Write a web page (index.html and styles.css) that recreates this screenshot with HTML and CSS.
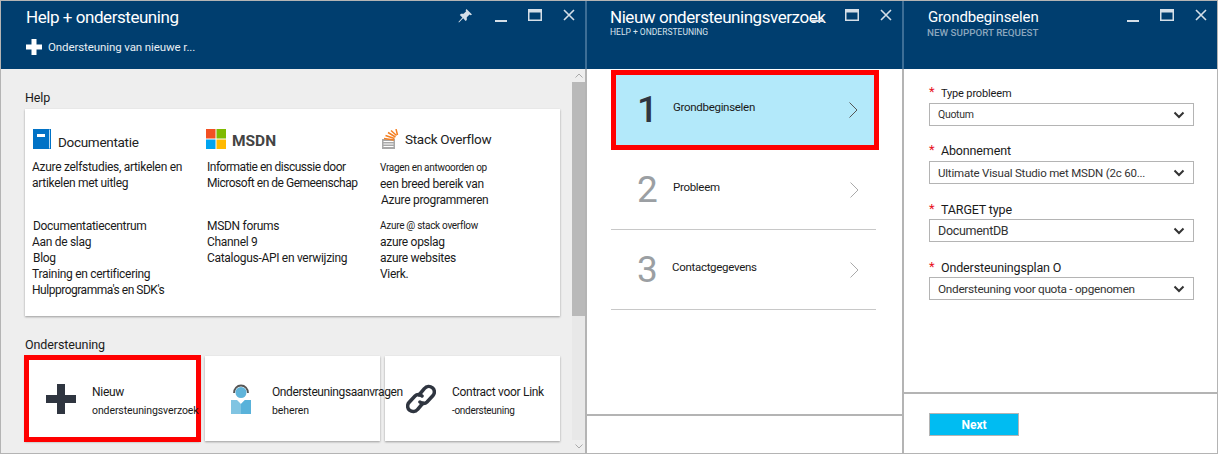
FILE: index.html
```html
<!DOCTYPE html>
<html>
    <head>
        <title>Help + ondersteuning</title>
        <meta charset=utf8>
        <link rel="stylesheet" href="styles.css">
    </head>
    <body>
        <svg class="defs" width="0" height="0">
            <symbol id="i-pin" viewBox="0 0 14 14"><path d="M8.500 0 14 5.500 12.600 6.200 11.600 5.600 8.800 8.200 8.800 11 7.600 12 5.200 9.200 1 13.400 0.400 13 4.400 8.400 1.800 6 3 4.800 5.600 4.800 8.200 2.200 7.600 1.200Z" fill="#d5dfe8"/></symbol>
            <symbol id="i-min" viewBox="0 0 12 12"><rect x="0" y="10" width="12" height="2" fill="#d5dfe8"/></symbol>
            <symbol id="i-max" viewBox="0 0 14 12"><path d="M0 0H14V12H0ZM1.500 3.500V10.500H12.500V3.500Z" fill="#d5dfe8" fill-rule="evenodd"/></symbol>
            <symbol id="i-close" viewBox="0 0 12 12"><path d="M1 1 11 11M11 1 1 11" stroke="#d5dfe8" stroke-width="1.600" fill="none"/></symbol>
            <symbol id="i-caret" viewBox="0 0 12 8"><path d="M1.500 1.500 6 6 10.500 1.500" stroke="#333" stroke-width="2" fill="none"/></symbol>
        </svg>

        <div class="portal">
            <!-- first blade -->
            <section class="blade blade-help">
                <header class="head head-tall">
                    <div class="head-top">
                        <h1 class="title">Help + ondersteuning</h1>
                        <div class="controls">
                            <svg class="ctl ctl-pin"><use href="#i-pin"/></svg>
                            <svg class="ctl ctl-min"><use href="#i-min"/></svg>
                            <svg class="ctl ctl-max"><use href="#i-max"/></svg>
                            <svg class="ctl ctl-close"><use href="#i-close"/></svg>
                        </div>
                    </div>
                    <div class="command">
                        <svg class="command-plus" viewBox="0 0 16 16"><path d="M5.500 0h5v5.500H16v5h-5.500V16h-5v-5.500H0v-5h5.500Z" fill="#fff"/></svg>
                        <span>Ondersteuning van nieuwe r...</span>
                    </div>
                </header>
                <div class="help-body">
                    <div class="help-main">
                        <h3 class="section-label">Help</h3>
                        <div class="card">
                            <div class="col col-docs">
                                <div class="col-head">
                                    <svg class="logo-book" viewBox="0 0 18 20">
                                        <path d="M0 0H18V20H0Z" fill="#0072c6"/>
                                        <path d="M16.500 0.500V19.500" stroke="#bcdcf2" stroke-width="1"/>
                                        <rect x="4" y="5" width="8" height="3" fill="#fff"/>
                                    </svg>
                                    <span class="col-title col-title-docs">Documentatie</span>
                                </div>
                                <p class="desc">Azure zelfstudies, artikelen en<br>artikelen met uitleg</p>
                                <ul class="links">
                                    <li class="nudge">Documentatiecentrum</li>
                                    <li>Aan de slag</li>
                                    <li class="nudge">Blog</li>
                                    <li>Training en certificering</li>
                                    <li class="tight">Hulpprogramma's en SDK's</li>
                                </ul>
                            </div>
                            <div class="col col-msdn">
                                <div class="col-head">
                                    <svg class="logo-ms" viewBox="0 0 20 20">
                                        <rect width="9.500" height="9.500" fill="#f25022"/>
                                        <rect x="10.500" width="9.500" height="9.500" fill="#7fba00"/>
                                        <rect y="10.500" width="9.500" height="9.500" fill="#00a4ef"/>
                                        <rect x="10.500" y="10.500" width="9.500" height="9.500" fill="#ffb900"/>
                                    </svg>
                                    <span class="msdn">MSDN</span>
                                </div>
                                <p class="desc tight">Informatie en discussie door<br>Microsoft en de Gemeenschap</p>
                                <ul class="links">
                                    <li>MSDN forums</li>
                                    <li>Channel 9</li>
                                    <li>Catalogus-API en verwijzing</li>
                                </ul>
                            </div>
                            <div class="col col-so">
                                <div class="col-head">
                                    <svg class="logo-so" viewBox="0 0 18 20">
                                        <path d="M1 10H14V20H1Z" fill="#a8a8a8"/>
                                        <path d="M2.500 12.500H12.500M2.500 15H12.500M2.500 17.500H12.500" stroke="#fff" stroke-width="1"/>
                                        <path d="M3 9.500 13 11M4.500 6.500 13.500 9.500M7 3.500 14.500 8M10 1.500 15.500 6.500M15 0 16.500 6" stroke="#f48024" stroke-width="1.500" fill="none"/>
                                    </svg>
                                    <span class="col-title">Stack Overflow</span>
                                </div>
                                <p class="desc"><span class="tiny">Vragen en antwoorden op</span><br>een breed bereik van<br><span class="nudge-inline">Azure programmeren</span></p>
                                <ul class="links">
                                    <li class="tiny">Azure @ stack overflow</li>
                                    <li>azure opslag</li>
                                    <li>azure websites</li>
                                    <li>Vierk.</li>
                                </ul>
                            </div>
                        </div>
                        <h3 class="section-label">Ondersteuning</h3>
                        <div class="tiles">
                            <div class="tile tile-marked">
                                <svg class="tile-icon" viewBox="0 0 30 30"><path d="M11 0H19V11H30V19H19V30H11V19H0V11H11Z" fill="#2f3540"/></svg>
                                <div class="tile-text">
                                    <div>Nieuw</div>
                                    <div class="tile-sub">ondersteuningsverzoek</div>
                                </div>
                            </div>
                            <div class="tile">
                                <svg class="tile-icon tile-icon-person" viewBox="0 0 20 30">
                                    <path d="M3 9A7 7.500 0 1 1 17 9" stroke="#555" stroke-width="1.800" fill="none"/>
                                    <circle cx="10" cy="8.500" r="5.500" fill="#5fb4da"/>
                                    <path d="M0 16H6L10 20 14 16H20V30H0Z" fill="#80c4e2"/>
                                    <path d="M10 20 14 16H20V30H10Z" fill="#59b2da"/>
                                </svg>
                                <div class="tile-text">
                                    <div class="tile-main-tight">Ondersteuningsaanvragen</div>
                                    <div class="tile-sub">beheren</div>
                                </div>
                            </div>
                            <div class="tile">
                                <svg class="tile-icon" viewBox="0 0 30 30">
                                    <g fill="none" stroke="#2f3540" stroke-width="3.500" stroke-linecap="round">
                                        <path d="M13 11 18.500 4.500C20.500 2 24 1.800 26.500 3.800 29 6 28.800 9.500 27 11.500L21 18C19 20 16 19.800 14 18"/>
                                        <path d="M17 19 11.500 25.500C9.500 28 6 28.200 3.500 26.200 1 24 1.200 20.500 3 18.500L9 12C11 10 14 10.200 16 12"/>
                                    </g>
                                </svg>
                                <div class="tile-text">
                                    <div>Contract voor Link</div>
                                    <div class="tile-sub tile-sub-small">-ondersteuning</div>
                                </div>
                            </div>
                        </div>
                    </div>
                    <div class="scrollbar">
                        <div class="scroll-btn">
                            <svg viewBox="0 0 8 5" class="scroll-arrow"><path d="M0.500 4.500 4 1 7.500 4.500" stroke="#aaa" fill="none"/></svg>
                        </div>
                        <div class="scroll-thumb"></div>
                        <div class="scroll-rest"></div>
                        <div class="scroll-btn">
                            <svg viewBox="0 0 8 5" class="scroll-arrow"><path d="M0.500 0.500 4 4 7.500 0.500" stroke="#aaa" fill="none"/></svg>
                        </div>
                    </div>
                </div>
            </section>

            <!-- second blade -->
            <section class="blade blade-steps">
                <header class="head head-tall">
                    <div class="head-top">
                        <div class="title-wrap">
                            <h1 class="title">Nieuw ondersteuningsverzoek</h1>
                            <div class="subtitle subtitle-light">HELP + ONDERSTEUNING</div>
                        </div>
                        <div class="controls">
                            <svg class="ctl ctl-min"><use href="#i-min"/></svg>
                            <svg class="ctl ctl-max"><use href="#i-max"/></svg>
                            <svg class="ctl ctl-close"><use href="#i-close"/></svg>
                        </div>
                    </div>
                </header>
                <div class="steps">
                    <div class="step step-active">
                        <span class="step-num">1</span>
                        <span class="step-name">Grondbeginselen</span>
                        <svg class="chev" viewBox="0 0 9 16"><path d="M0.500 0.500 8 8 0.500 15.500" stroke="#555" fill="none"/></svg>
                    </div>
                    <div class="step">
                        <span class="step-num">2</span>
                        <span class="step-name">Probleem</span>
                        <svg class="chev" viewBox="0 0 9 16"><path d="M0.500 0.500 8 8 0.500 15.500" stroke="#aaa" fill="none"/></svg>
                    </div>
                    <div class="step">
                        <span class="step-num">3</span>
                        <span class="step-name step-name-left">Contactgegevens</span>
                        <svg class="chev" viewBox="0 0 9 16"><path d="M0.500 0.500 8 8 0.500 15.500" stroke="#aaa" fill="none"/></svg>
                    </div>
                </div>
                <div class="blade-foot blade-foot-steps"></div>
            </section>

            <!-- third blade -->
            <section class="blade blade-form">
                <header class="head head-tall">
                    <div class="head-top">
                        <div class="title-wrap title-wrap-form">
                            <h1 class="title title-small">Grondbeginselen</h1>
                            <div class="subtitle subtitle-dim">NEW SUPPORT REQUEST</div>
                        </div>
                        <div class="controls">
                            <svg class="ctl ctl-min"><use href="#i-min"/></svg>
                            <svg class="ctl ctl-max"><use href="#i-max"/></svg>
                            <svg class="ctl ctl-close"><use href="#i-close"/></svg>
                        </div>
                    </div>
                </header>
                <div class="form">
                    <div class="field">
                        <label class="field-label field-label-small"><span class="req">*</span>Type probleem</label>
                        <div class="select select-xs">Quotum<svg class="caret"><use href="#i-caret"/></svg></div>
                    </div>
                    <div class="field">
                        <label class="field-label field-label-up"><span class="req">*</span>Abonnement</label>
                        <div class="select select-sm">Ultimate Visual Studio met MSDN (2c 60...<svg class="caret"><use href="#i-caret"/></svg></div>
                    </div>
                    <div class="field">
                        <label class="field-label"><span class="req">*</span>TARGET type</label>
                        <div class="select select-lg">DocumentDB<svg class="caret"><use href="#i-caret"/></svg></div>
                    </div>
                    <div class="field">
                        <label class="field-label"><span class="req">*</span>Ondersteuningsplan O</label>
                        <div class="select">Ondersteuning voor quota - opgenomen<svg class="caret"><use href="#i-caret"/></svg></div>
                    </div>
                </div>
                <div class="blade-foot blade-foot-form">
                    <button class="next">Next</button>
                </div>
            </section>
        </div>
    </body>
</html>
```

FILE: styles.css
```css
html, body {
    margin: 0;
    padding: 0;
    background-color: white;
}
body {
    width: 1218px;
    height: 454px;
    overflow: hidden;
    font-family: Roboto, "Liberation Sans", sans-serif;
    font-size: 12px;
    letter-spacing: -0.3px;
    color: #1a1a1a;
}
.defs {
    position: absolute;
}
.portal {
    display: flex;
    box-sizing: border-box;
    width: 1218px;
    height: 454px;
    border: 1px solid #b4b4b4;
}
.blade {
    display: flex;
    flex-direction: column;
    box-sizing: border-box;
    height: 452px;
    flex: none;
    background-color: white;
}
.blade-help {
    width: 584px;
    background-color: #eeeeee;
}
.blade-steps {
    width: 317px;
    border-left: 2px solid #b4b4b4;
}
.blade-form {
    width: 315px;
    border-left: 2px solid #b4b4b4;
}

/* headers */
.head {
    flex: none;
    height: 68px;
    background-color: #003e6f;
    color: white;
    box-sizing: border-box;
}
.blade-steps .head, .blade-form .head {
    box-shadow: -2px 0 0 #3d6e96;
}
.head-top {
    display: flex;
    justify-content: space-between;
}
.title {
    margin: 0;
    font-size: 17px;
    font-weight: normal;
    letter-spacing: -0.45px;
    line-height: 20px;
    padding: 6px 0 0 25px;
    white-space: nowrap;
}
.title-wrap {
    flex: 1;
    width: 0;
}
.title-wrap .title {
    padding-left: 23px;
}
.title-wrap-form .title {
    padding-left: 24px;
}
.title-small {
    font-size: 15px;
    letter-spacing: -0.15px;
}
.subtitle {
    font-size: 9.500px;
    letter-spacing: 0;
    line-height: 11px;
    padding: 0 0 0 23px;
    white-space: nowrap;
}
.subtitle-light {
    font-size: 8.500px;
    color: #d8e4ee;
}
.subtitle-dim {
    font-size: 9.800px;
    color: #8ba6bd;
    font-weight: 500;
}
.controls {
    display: flex;
    align-items: flex-start;
    padding: 8px 10px 0 0;
}
.ctl {
    display: block;
    flex: none;
}
.ctl-pin {
    width: 14px;
    height: 14px;
    margin-right: 23px;
}
.ctl-min {
    width: 12px;
    height: 12px;
    margin-right: 21px;
    margin-top: 1px;
}
.ctl-max {
    width: 14px;
    height: 12px;
    margin-right: 21px;
}
.ctl-close {
    width: 12px;
    height: 12px;
}
.command {
    display: flex;
    align-items: center;
    padding: 12px 0 0 25px;
    font-size: 11.500px;
    letter-spacing: -0.1px;
    color: #e8eef3;
}
.command-plus {
    width: 16px;
    height: 16px;
    margin-right: 6px;
}

/* help blade */
.help-body {
    flex: 1;
    display: flex;
    min-height: 0;
}
.help-main {
    flex: 1;
    min-width: 0;
    padding: 0 12px 0 24px;
}
.section-label {
    margin: 0;
    box-sizing: border-box;
    height: 40px;
    padding-top: 20px;
    font-size: 12.500px;
    font-weight: normal;
    letter-spacing: -0.1px;
    line-height: 18px;
}
.card {
    display: flex;
    box-sizing: border-box;
    width: 535px;
    height: 207px;
    padding: 20px 0 0 7px;
    background-color: white;
    box-shadow: 0 1px 2px rgba(0, 0, 0, 0.35);
}
.col-docs {
    width: 175px;
}
.col-msdn {
    width: 173px;
}
.col-head {
    display: flex;
    align-items: center;
    height: 20px;
}
.logo-book {
    width: 18px;
    height: 20px;
    margin: 0 7px 0 1px;
}
.logo-ms {
    width: 20px;
    height: 20px;
    margin: 0 6px 0 -1px;
}
.logo-so {
    width: 18px;
    height: 20px;
    margin-right: 6px;
    margin-left: 1px;
}
.col-title {
    font-size: 13.500px;
    color: #222;
}
.col-title-docs {
    padding-top: 5px;
}
.msdn {
    padding-top: 3px;
    font-size: 15.500px;
    font-weight: bold;
    letter-spacing: 0;
    color: #444;
}
.desc {
    margin: 10px 0 0 0;
    height: 48px;
    line-height: 16px;
    white-space: nowrap;
}
.links {
    list-style: none;
    margin: 11px 0 0 0;
    padding: 0;
    line-height: 16px;
    white-space: nowrap;
}
.nudge {
    padding-left: 1px;
}
.nudge-inline {
    margin-left: 1px;
}
.tight {
    letter-spacing: -0.48px;
}
.tiny {
    font-size: 10px;
}
.tiles {
    display: flex;
    gap: 5px;
    height: 85px;
}
.tile {
    display: flex;
    align-items: center;
    box-sizing: border-box;
    width: 175px;
    height: 85px;
    padding-left: 21px;
    background-color: white;
    box-shadow: 0 1px 2px rgba(0, 0, 0, 0.35);
    white-space: nowrap;
}
.tile-marked {
    outline: 5px solid #ff0000;
    outline-offset: -4px;
}
.tile-icon {
    width: 30px;
    height: 30px;
    flex: none;
    margin-right: 16px;
}
.tile-icon-person {
    width: 20px;
    margin: 0 21px 0 5px;
}
.tile-text {
    position: relative;
    z-index: 1;
    line-height: 16px;
    padding-top: 5px;
}
.tile-main-tight {
    letter-spacing: -0.4px;
}
.tile-sub {
    margin-top: 3px;
    font-size: 10.500px;
    letter-spacing: -0.1px;
}
.tile-sub-small {
    font-size: 10px;
    letter-spacing: -0.3px;
}
.scrollbar {
    flex: none;
    width: 13px;
    display: flex;
    flex-direction: column;
    background-color: #e8e8e8;
}
.scroll-btn {
    flex: none;
    height: 13px;
    display: flex;
    align-items: center;
    justify-content: center;
    background-color: #eeeeee;
}
.scroll-arrow {
    width: 8px;
    height: 5px;
}
.scroll-thumb {
    flex: none;
    height: 234px;
    background-color: #b9b9b9;
}
.scroll-rest {
    flex: 1;
}

/* steps blade */
.steps {
    flex: 1;
    padding: 1px 0 0 24px;
}
.step {
    display: flex;
    align-items: center;
    box-sizing: border-box;
    width: 265px;
    height: 80px;
    border-bottom: 1px solid #c8c8c8;
}
.step-active {
    width: 268px;
    background-color: #b3e9fa;
    border: 5px solid #ff0000;
}
.step-num {
    width: 62px;
    padding-left: 26px;
    box-sizing: border-box;
    font-size: 37px;
    line-height: 40px;
    color: #9b9fa3;
    flex: none;
}
.step-active .step-num {
    color: #2f3540;
    font-weight: 500;
    width: 57px;
    padding-left: 21px;
}
.step-name {
    flex: 1;
    font-size: 11.500px;
    padding-bottom: 6px;
}
.step-name-left {
    margin-left: -1px;
}
.chev {
    width: 9px;
    height: 16px;
    flex: none;
    margin-right: 17px;
}
.step-active .chev {
    margin-right: 16px;
}
.blade-foot {
    flex: none;
    box-sizing: border-box;
    border-top: 2px solid #b4b4b4;
}
.blade-foot-steps {
    height: 39px;
}
.blade-foot-form {
    height: 61px;
    padding: 19px 0 0 25px;
}

/* form blade */
.form {
    flex: 1;
    display: flex;
    flex-direction: column;
    gap: 16px;
    padding: 15px 23px 0 25px;
}
.field-label {
    display: block;
    height: 19px;
    line-height: 17px;
    font-size: 12.500px;
    letter-spacing: -0.15px;
    white-space: nowrap;
}
.field-label-small {
    font-size: 11px;
    line-height: 16px;
}
.field-label-up {
    line-height: 16px;
}
.req {
    display: inline-block;
    width: 12px;
    color: #e81123;
    font-size: 13px;
    vertical-align: 1px;
}
.select {
    display: flex;
    align-items: center;
    justify-content: space-between;
    box-sizing: border-box;
    height: 23px;
    width: 265px;
    padding: 0 8px;
    border: 1px solid #b4b4b4;
    background-color: white;
    font-size: 11.800px;
    color: #333;
    white-space: nowrap;
}
.select-xs {
    font-size: 10.500px;
}
.select-sm {
    font-size: 11.500px;
    letter-spacing: -0.2px;
}
.select-lg {
    font-size: 12.500px;
}
.caret {
    width: 12px;
    height: 8px;
    flex: none;
}
.next {
    display: block;
    box-sizing: border-box;
    width: 90px;
    height: 23px;
    padding: 0;
    border: 1px solid #b4b4b4;
    background-color: #00bcf2;
    color: white;
    font-family: Roboto, "Liberation Sans", sans-serif;
    font-size: 12px;
    font-weight: bold;
}
```
